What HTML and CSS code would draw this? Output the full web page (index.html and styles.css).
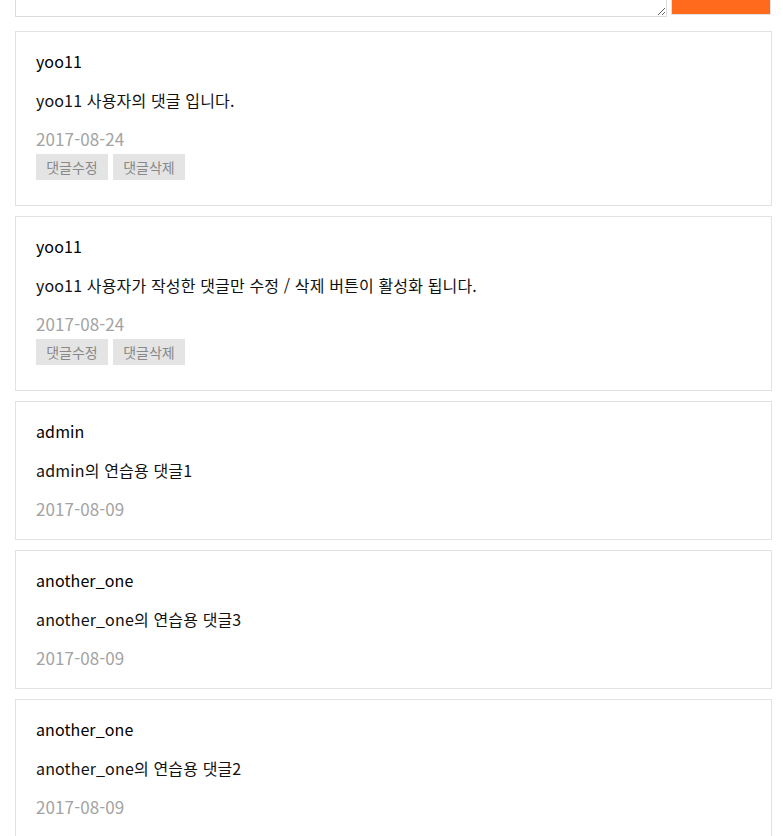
FILE: index.html
```html
<!DOCTYPE html>
<html lang="ko">
<head>
<meta charset="utf-8">
<title>댓글</title>
<link rel="stylesheet" href="styles.css">
</head>
<body>
<div class="page">
  <form class="write">
    <textarea class="write-text"></textarea>
    <button type="button" class="write-btn"></button>
  </form>
  <ul class="comments">
    <li class="comment">
      <div class="name">yoo11</div>
      <div class="body">yoo11 사용자의 댓글 입니다.</div>
      <div class="date">2017-08-24</div>
      <div class="actions"><span class="act">댓글수정</span><span class="act">댓글삭제</span></div>
    </li>
    <li class="comment">
      <div class="name">yoo11</div>
      <div class="body">yoo11 사용자가 작성한 댓글만 수정 / 삭제 버튼이 활성화 됩니다.</div>
      <div class="date">2017-08-24</div>
      <div class="actions"><span class="act">댓글수정</span><span class="act">댓글삭제</span></div>
    </li>
    <li class="comment">
      <div class="name">admin</div>
      <div class="body">admin의 연습용 댓글1</div>
      <div class="date">2017-08-09</div>
    </li>
    <li class="comment">
      <div class="name">another_one</div>
      <div class="body">another_one의 연습용 댓글3</div>
      <div class="date">2017-08-09</div>
    </li>
    <li class="comment">
      <div class="name">another_one</div>
      <div class="body">another_one의 연습용 댓글2</div>
      <div class="date">2017-08-09</div>
    </li>
  </ul>
</div>
</body>
</html>
```
FILE: styles.css
```css
html, body {
  margin: 0;
  padding: 0;
  background: #fff;
}
body {
  font-family: "Noto Sans CJK KR", "Noto Sans", sans-serif;
  font-size: 16px;
  color: #111;
  overflow: hidden;
}
.page {
  padding: 0 12px 0 15px;
}
.write {
  display: flex;
  align-items: flex-start;
  gap: 4px;
  margin: -84px 0 0 0;
}
.write-text {
  box-sizing: border-box;
  width: 652px;
  height: 101px;
  margin: 0;
  border: 1px solid #dcdcdc;
  background: #fff;
  resize: both;
  display: block;
}
.write-btn {
  box-sizing: border-box;
  width: 100px;
  height: 99px;
  margin: 0;
  border: 1px solid #e2e2e2;
  background: #ff6a1c;
  padding: 0;
}
.comments {
  list-style: none;
  margin: 14px 0 0 0;
  padding: 0;
  display: flex;
  flex-direction: column;
  gap: 10px;
}
.comment {
  border: 1px solid #e2e2e2;
  padding: 19px 20px 20px 20px;
  width: 715px;
}
.name {
  line-height: 20px;
  height: 20px;
  color: #000;
  letter-spacing: 0.1px;
}
.body {
  margin-top: 19px;
  line-height: 20px;
  height: 20px;
  color: #111;
  letter-spacing: 0.15px;
}
.date {
  margin-top: 19px;
  line-height: 20px;
  height: 20px;
  color: #a3a3a3;
  font-size: 17px;
  letter-spacing: 0.1px;
}
.actions {
  display: flex;
  gap: 5px;
  margin-top: 5px;
  margin-bottom: 5px;
}
.act {
  display: block;
  width: 72px;
  height: 26px;
  line-height: 26px;
  text-align: center;
  background: #e4e4e4;
  color: #888;
  font-size: 14px;
}
```
